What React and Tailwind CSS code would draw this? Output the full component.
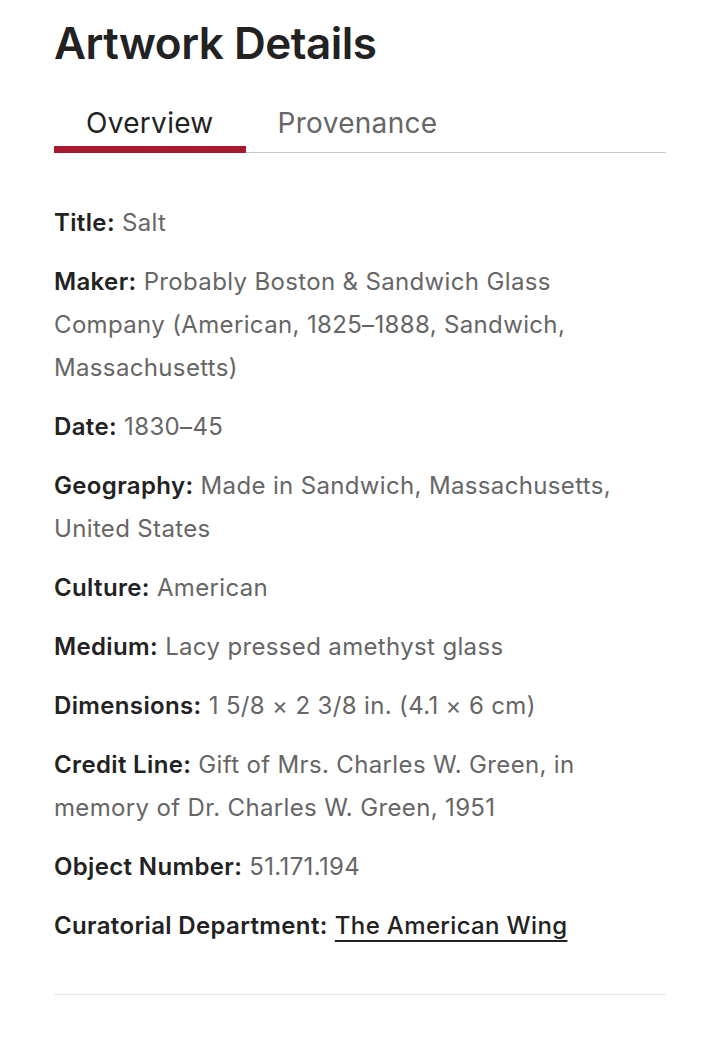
import React, { useState } from 'react';

const details = [
    { label: 'Title', value: 'Salt' },
    { label: 'Maker', value: 'Probably Boston & Sandwich Glass Company (American, 1825–1888, Sandwich, Massachusetts)' },
    { label: 'Date', value: '1830–45' },
    { label: 'Geography', value: 'Made in Sandwich, Massachusetts, United States' },
    { label: 'Culture', value: 'American' },
    { label: 'Medium', value: 'Lacy pressed amethyst glass' },
    { label: 'Dimensions', value: '1 5/8 × 2 3/8 in. (4.1 × 6 cm)' },
    { label: 'Credit Line', value: 'Gift of Mrs. Charles W. Green, in memory of Dr. Charles W. Green, 1951' },
    { label: 'Object Number', value: '51.171.194' },
];

export default function App() {
    const [tab, setTab] = useState('overview');

    return (
        <div className="min-h-screen bg-white px-[54px] font-['Inter',sans-serif] text-[#222]">
            <h1 className="pt-[16px] text-[44px] font-semibold leading-[54px] tracking-[-0.5px]">Artwork Details</h1>

            <div className="mt-[36px] flex border-b border-[#c8c8c8]">
                <button
                    onClick={() => setTab('overview')}
                    className={`-mb-px px-8 pb-[6px] text-[28px] leading-[34px] tracking-[0.3px] border-b-[7px] ${tab === 'overview' ? 'border-[#a6192e] text-[#222]' : 'border-transparent text-[#666]'}`}
                >
                    Overview
                </button>
                <button
                    onClick={() => setTab('provenance')}
                    className={`-mb-px px-8 pb-[6px] text-[28px] leading-[34px] tracking-[0.3px] border-b-[7px] ${tab === 'provenance' ? 'border-[#a6192e] text-[#222]' : 'border-transparent text-[#666]'}`}
                >
                    Provenance
                </button>
            </div>

            <div className="pt-[48px] pb-[47px] border-b border-[#e5e5e5] text-[24px] leading-[43px] tracking-[0.35px]">
                {details.map((d) => (
                    <p key={d.label} className="mb-4">
                        <span className="font-semibold text-[#222]">{d.label}:</span>{' '}
                        <span className="text-[#666]">{d.value}</span>
                    </p>
                ))}
                <p>
                    <span className="font-semibold text-[#222]">Curatorial Department:</span>{' '}
                    <a href="#" className="font-medium text-[#222] underline underline-offset-[6px] decoration-2">The American Wing</a>
                </p>
            </div>
        </div>
    );
}
